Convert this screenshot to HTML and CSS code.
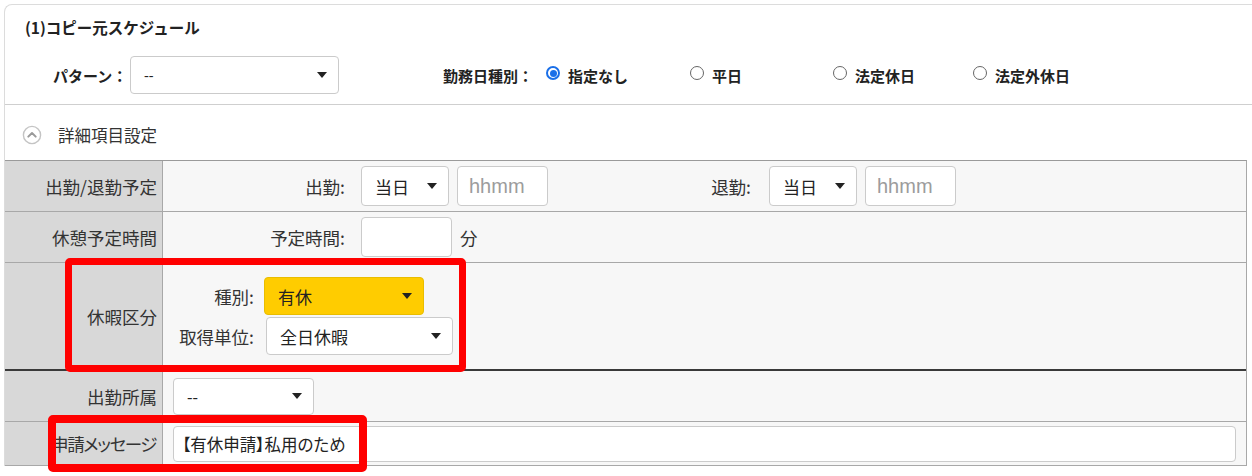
FILE: index.html
```html
<!DOCTYPE html>
<html lang="ja">
<head>
<meta charset="utf-8">
<title>コピー元スケジュール</title>
<link rel="stylesheet" href="styles.css">
</head>
<body>
<div class="card">
  <div class="top">
    <div class="title">(1)コピー元スケジュール</div>
    <div class="pattern-row">
      <span class="plabel">パターン：</span>
      <div class="select sel-pattern"><span class="val">--</span><svg class="caret" viewBox="0 0 10 6"><path d="M0 0H10L5 6Z"/></svg></div>
      <span class="wlabel">勤務日種別：</span>
      <span class="ropt o1"><span class="radio checked"></span>指定なし</span>
      <span class="ropt o2"><span class="radio"></span>平日</span>
      <span class="ropt o3"><span class="radio"></span>法定休日</span>
      <span class="ropt o4"><span class="radio"></span>法定外休日</span>
    </div>
  </div>
  <div class="detail-head">
    <svg class="toggle" viewBox="0 0 20 20"><circle cx="10" cy="10" r="8.6" fill="#fff" stroke="#c4c4c4" stroke-width="1.4"/><path d="M6.3 11.6L10 8l3.7 3.6" fill="none" stroke="#9a9a9a" stroke-width="2" stroke-linecap="round" stroke-linejoin="round"/></svg>
    <span>詳細項目設定</span>
  </div>
  <div class="table">
    <div class="row r1">
      <div class="th">出勤/退勤予定</div>
      <div class="td">
        <span class="flabel w-in">出勤:</span>
        <div class="select sel-day"><span class="val">当日</span><svg class="caret" viewBox="0 0 10 6"><path d="M0 0H10L5 6Z"/></svg></div>
        <div class="input in-time">hhmm</div>
        <span class="flabel w-out">退勤:</span>
        <div class="select sel-day"><span class="val">当日</span><svg class="caret" viewBox="0 0 10 6"><path d="M0 0H10L5 6Z"/></svg></div>
        <div class="input in-time">hhmm</div>
      </div>
    </div>
    <div class="row r2">
      <div class="th">休憩予定時間</div>
      <div class="td">
        <span class="flabel w-in">予定時間:</span>
        <div class="input in-break"></div>
        <span class="unit">分</span>
      </div>
    </div>
    <div class="row r3">
      <div class="th">休暇区分</div>
      <div class="td td-col">
        <div class="sub">
          <span class="flabel w-kind">種別:</span>
          <div class="select sel-kind"><span class="val">有休</span><svg class="caret" viewBox="0 0 10 6"><path d="M0 0H10L5 6Z"/></svg></div>
        </div>
        <div class="sub">
          <span class="flabel w-kind">取得単位:</span>
          <div class="select sel-unit"><span class="val">全日休暇</span><svg class="caret" viewBox="0 0 10 6"><path d="M0 0H10L5 6Z"/></svg></div>
        </div>
      </div>
    </div>
    <div class="row r4">
      <div class="th">出勤所属</div>
      <div class="td td-pad">
        <div class="select sel-dept"><span class="val">--</span><svg class="caret" viewBox="0 0 10 6"><path d="M0 0H10L5 6Z"/></svg></div>
      </div>
    </div>
    <div class="row r5">
      <div class="th th-narrow">申請メッセージ</div>
      <div class="td td-pad">
        <div class="input in-msg">【有休申請】私用のため</div>
      </div>
    </div>
  </div>
  <div class="mark mark1"></div>
  <div class="mark mark2"></div>
</div>
</body>
</html>
```

FILE: styles.css
```css
* { box-sizing: border-box; }
html, body { margin: 0; padding: 0; background: #fff; }
body {
  font-family: "Noto Sans", "Noto Sans CJK JP", sans-serif;
  color: #333;
  width: 1252px;
  height: 476px;
  overflow: hidden;
}
.card {
  position: relative;
  margin: 4px 0 0 4px;
  border-top: 1px solid #dcdcdc;
  border-left: 1px solid #dcdcdc;
  border-top-left-radius: 8px;
}
.top {
  padding: 12px 0 10px 0;
  border-bottom: 1px solid #cfcfcf;
}
.title {
  padding-left: 20px;
  font-family: "Noto Sans CJK JP", sans-serif;
  font-weight: 700;
  font-size: 15.5px;
  line-height: 20px;
  color: #222;
}
.pattern-row {
  display: flex;
  align-items: center;
  margin-top: 19px;
  height: 38px;
  font-family: "Noto Sans CJK JP", sans-serif;
  font-weight: 700;
  font-size: 15px;
  color: #222;
}
.plabel { margin-left: 48px; width: 77px; flex-shrink: 0; }
.wlabel { margin-left: 104px; width: 103px; flex-shrink: 0; }
.ropt { display: flex; align-items: center; flex-shrink: 0; }
.o1 { width: 144px; }
.o2 { width: 143px; }
.o3 { width: 140px; }
.radio {
  width: 14px;
  height: 14px;
  border-radius: 50%;
  border: 1px solid #666;
  background: #fff;
  margin-right: 8px;
  margin-top: -4px;
  position: relative;
  flex-shrink: 0;
}
.radio.checked { border: 2px solid #1a6fe8; }
.radio.checked::after {
  content: "";
  position: absolute;
  left: 1.5px; top: 1.5px;
  width: 7px; height: 7px;
  border-radius: 50%;
  background: #1a6fe8;
}

.select {
  display: flex;
  align-items: center;
  justify-content: space-between;
  background: #fff;
  border: 1px solid #cbcbcb;
  border-radius: 4px;
  padding: 0 11px 0 13px;
  flex-shrink: 0;
  font-family: "Open Sans", "Noto Sans CJK JP", sans-serif;
  font-feature-settings: normal;
  font-weight: 400;
  font-size: 17px;
  color: #222;
}
.caret { width: 10px; height: 6px; fill: #222; flex-shrink: 0; }
.sel-pattern { width: 209px; height: 38px; margin-left: 0; font-size: 15px; }
.input {
  background: #fff;
  border: 1px solid #cbcbcb;
  border-radius: 4px;
  flex-shrink: 0;
  display: flex;
  align-items: center;
  font-size: 18px;
  color: #222;
}

.detail-head {
  height: 55px;
  display: flex;
  align-items: center;
  padding: 4px 0 0 17px;
  font-family: "Noto Sans CJK JP", sans-serif;
  font-size: 16.5px;
  color: #333;
}
.toggle { width: 20px; height: 20px; margin-right: 16px; }

.table {
  width: 1242px;
  border-top: 1px solid #9a9a9a;
  border-right: 1px solid #a8a8a8;
  font-family: "Noto Sans CJK JP", sans-serif;
  font-feature-settings: "palt";
  font-size: 17.5px;
}
.row {
  display: grid;
  grid-template-columns: 158px 1fr;
  border-bottom: 1px solid #a8a8a8;
}
.r1 { height: 51px; }
.r2 { height: 51px; }
.r3 { height: 108px; border-bottom: 2px solid #3a3a3a; }
.r4 { height: 51px; }
.r5 { height: 44px; }
.th {
  background: #d8d8d8;
  border-right: 1px solid #a8a8a8;
  display: flex;
  align-items: center;
  justify-content: flex-end;
  padding-right: 5px;
  color: #333;
  white-space: nowrap;
}
.th-narrow { letter-spacing: -1.4px; padding-right: 6px; }
.td {
  background: #f7f7f7;
  display: flex;
  align-items: center;
}
.flabel { text-align: right; flex-shrink: 0; color: #333; }
.w-in { width: 182px; margin-right: 16px; }
.w-out { width: 203px; margin-right: 18px; }
.sel-day { width: 88px; height: 40px; }
.in-time { width: 91px; height: 40px; margin-left: 8px; padding-left: 11px; color: #9c9c9c; font-family: "Liberation Sans", sans-serif; font-size: 20px; }
.in-break { width: 91px; height: 40px; }
.unit { margin-left: 8px; color: #333; }

.td-col { flex-direction: column; align-items: flex-start; justify-content: center; gap: 2px; padding-left: 10px; }
.sub { display: flex; align-items: center; }
.w-kind { width: 81px; }
.sel-kind { width: 160px; height: 38px; margin-left: 10px; background: #ffcc00; border-color: #e9bd00; }
.sel-unit { width: 187px; height: 38px; margin-left: 12px; }

.td-pad { padding: 0 10px; }
.sel-dept { width: 141px; height: 37px; }
.in-msg { width: 100%; height: 36px; padding-left: 8px; font-family: "Noto Sans CJK JP", sans-serif; font-size: 16.5px; }

.mark {
  position: absolute;
  border: 7px solid #f00;
  border-radius: 5px;
  pointer-events: none;
}
.mark1 { left: 60px; top: 253px; width: 401px; height: 114px; }
.mark2 { left: 43px; top: 410px; width: 319px; height: 57px; border-width: 8px; }
```
